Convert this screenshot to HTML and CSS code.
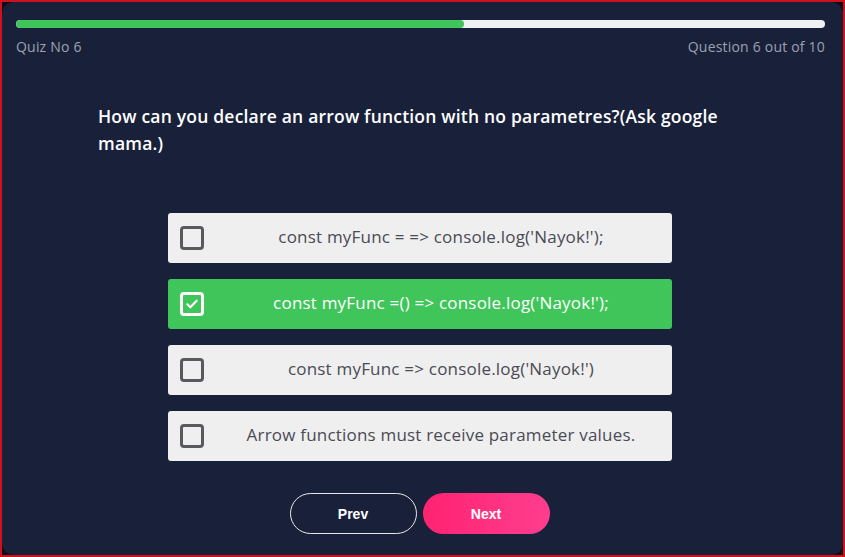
FILE: index.html
```html
<!DOCTYPE html>
<html>
<head>
<meta charset="utf-8">
<link rel="stylesheet" href="styles.css">
</head>
<body>
<div class="frame">
  <div class="panel">
    <div class="progress"><div class="progress-fill" style="width:55.4%"></div></div>
    <div class="meta">
      <span>Quiz No 6</span>
      <span>Question 6 out of 10</span>
    </div>
    <h1 class="question">How can you declare an arrow function with no parametres?(Ask google mama.)</h1>
    <div class="options">
      <label class="option"><span class="box"></span><span class="text">const myFunc = =&gt; console.log('Nayok!');</span></label>
      <label class="option selected"><span class="box"><svg viewBox="0 0 24 24" width="16" height="16"><path d="M5 12.5l4.5 4.5L19 7" fill="none" stroke="#fff" stroke-width="3.2" stroke-linecap="round" stroke-linejoin="round"/></svg></span><span class="text">const myFunc =() =&gt; console.log('Nayok!');</span></label>
      <label class="option"><span class="box"></span><span class="text">const myFunc =&gt; console.log('Nayok!')</span></label>
      <label class="option"><span class="box"></span><span class="text">Arrow functions must receive parameter values.</span></label>
    </div>
    <div class="actions">
      <button class="btn prev">Prev</button>
      <button class="btn next">Next</button>
    </div>
  </div>
</div>
</body>
</html>
```
FILE: styles.css
```css
* { box-sizing: border-box; }
html, body { margin: 0; padding: 0; }
body {
  width: 845px;
  height: 557px;
  background: #0e1120;
  font-family: "Open Sans", "Liberation Sans", sans-serif;
}
.frame {
  width: 845px;
  height: 557px;
  border: 2px solid #d0101a;
  background: #0b0e1a;
}
.panel {
  height: 100%;
  background: #19213a;
  border-radius: 12px;
  padding: 18px 18px 0 14px;
}
.progress {
  height: 8px;
  background: #eef0f1;
  border-radius: 4px;
  overflow: hidden;
}
.progress-fill {
  height: 100%;
  background: #3fc55c;
  border-radius: 4px;
}
.meta {
  display: flex;
  justify-content: space-between;
  margin-top: 9px;
  font-size: 14px;
  color: #9ba1b1;
  letter-spacing: 0.2px;
}
.question {
  margin: 47px 0 0 82px;
  width: 650px;
  color: #ffffff;
  font-size: 17.5px;
  font-weight: 600;
  letter-spacing: 0.2px;
  line-height: 27px;
}
.options {
  display: flex;
  flex-direction: column;
  gap: 16px;
  width: 504px;
  margin: 56px 0 0 152px;
}
.option {
  display: flex;
  align-items: center;
  height: 50px;
  background: #efefef;
  border-radius: 3px;
  padding-left: 12px;
  color: #4a4b55;
  font-size: 17px;
  letter-spacing: 0.2px;
}
.option .box {
  flex: none;
  width: 24px;
  height: 24px;
  border: 3px solid #5a5a5e;
  border-radius: 4px;
  display: flex;
  align-items: center;
  justify-content: center;
}
.option .text {
  flex: 1;
  text-align: center;
  padding-left: 6px;
  line-height: 22px;
  margin-top: -3px;
}
.option.selected {
  background: #40c55b;
  color: #ffffff;
}
.option.selected .box { border-color: #ffffff; }
.actions {
  display: flex;
  justify-content: center;
  gap: 6px;
  margin: 32px 0 0 -2px;
}
.btn {
  width: 127px;
  height: 41px;
  border-radius: 21px;
  font-family: "Liberation Sans", Arial, sans-serif;
  font-size: 14px;
  font-weight: 700;
  color: #ffffff;
  cursor: pointer;
}
.prev {
  background: transparent;
  border: 1px solid #e8e8ee;
}
.next {
  background: linear-gradient(90deg, #ff2371, #ff3d8e);
  border: none;
}
```
